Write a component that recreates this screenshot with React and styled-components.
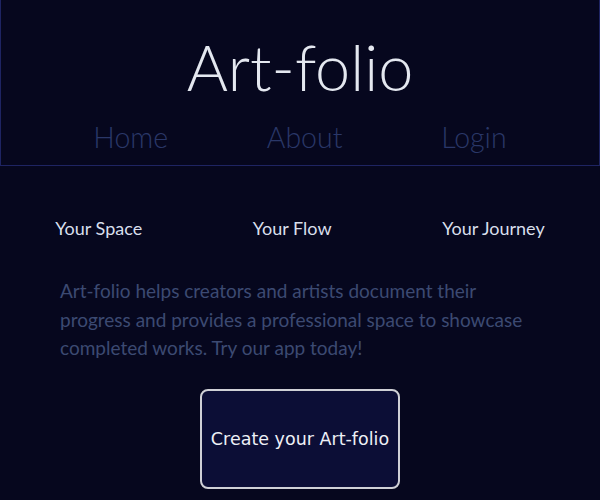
import React from "react"
import styled, { createGlobalStyle } from "styled-components"

const GlobalStyle = createGlobalStyle`
  html, body {
    margin: 0;
    padding: 0;
    background: #06071e;
  }
  body {
    font-family: "Lato", "Liberation Sans", sans-serif;
  }
`

const navItems = ["Home", "About", "Login"]
const features = ["Your Space", "Your Flow", "Your Journey"]

const App = () => {
  return (
    <>
      <GlobalStyle />
      <Page>
        <Header>
          <Title>Art-folio</Title>
          <Nav>
            {navItems.map((item) => (
              <NavLink key={item} href="#">
                {item}
              </NavLink>
            ))}
          </Nav>
        </Header>
        <Features>
          {features.map((f) => (
            <Feature key={f}>{f}</Feature>
          ))}
        </Features>
        <Blurb>
          Art-folio helps creators and artists document their progress and
          provides a professional space to showcase completed works. Try our
          app today!
        </Blurb>
        <BtnWrapper>
          <CreateButton>Create your Art-folio</CreateButton>
        </BtnWrapper>
      </Page>
    </>
  )
}

export default App

const Page = styled.div`
  width: 600px;
  min-height: 500px;
  background: #06071e;
`

const Header = styled.header`
  border: 1px solid #1e2462;
  border-top: none;
  height: 166px;
  box-sizing: border-box;
  display: flex;
  flex-direction: column;
  align-items: center;
`

const Title = styled.h1`
  margin: 27px 0 0;
  font-size: 63px;
  font-weight: 300;
  line-height: 80px;
  color: #e4e8f0;
`

const Nav = styled.nav`
  width: 512px;
  margin-top: 10px;
  display: flex;
  justify-content: space-around;
`

const NavLink = styled.a`
  font-size: 28.5px;
  font-weight: 300;
  line-height: 40px;
  color: #2a3768;
  text-decoration: none;
`

const Features = styled.div`
  display: flex;
  justify-content: space-around;
  margin-top: 50px;
`

const Feature = styled.div`
  font-size: 18px;
  line-height: 24px;
  color: #d8dfec;
`

const Blurb = styled.p`
  margin: 37px 0 0 60px;
  width: 480px;
  font-size: 19px;
  line-height: 28.5px;
  color: #3c4a72;
`

const BtnWrapper = styled.div`
  display: flex;
  justify-content: center;
  margin-top: 26px;
`

const CreateButton = styled.button`
  width: 200px;
  height: 100px;
  background: #0c0e36;
  border: 2px solid #cfd0d6;
  border-radius: 8px;
  color: #eef0f6;
  font-family: "DejaVu Sans", sans-serif;
  font-size: 17.5px;
  cursor: pointer;
`
